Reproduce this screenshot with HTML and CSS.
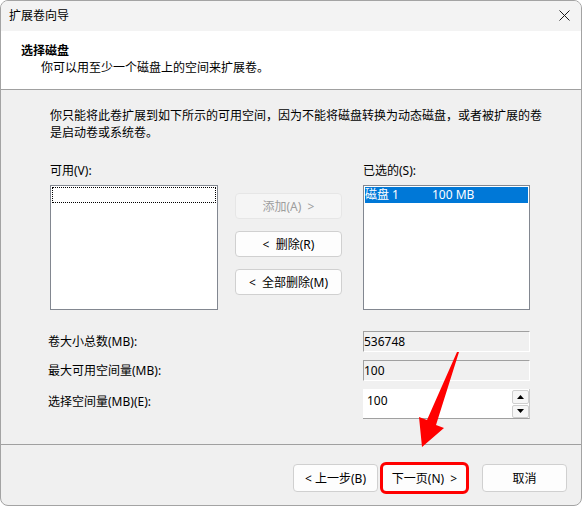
FILE: index.html
```html
<!DOCTYPE html>
<html lang="zh-CN">
<head>
  <meta charset="UTF-8">
  <title>扩展卷向导</title>
  <link rel="stylesheet" href="styles.css">
</head>
<body>
  <div class="window">
    <div class="titlebar">
      <span class="title">扩展卷向导</span>
      <svg class="close" width="11" height="11" viewBox="0 0 11 11">
        <path d="M0.5 0.5L10.5 10.5M10.5 0.5L0.5 10.5" stroke="#1a1a1a" stroke-width="1" fill="none"/>
      </svg>
    </div>

    <div class="header">
      <div class="header-title">选择磁盘</div>
      <div class="header-sub">你可以用至少一个磁盘上的空间来扩展卷。</div>
    </div>

    <div class="content">
      <p class="intro">你只能将此卷扩展到如下所示的可用空间，因为不能将磁盘转换为动态磁盘，或者被扩展的卷<br>是启动卷或系统卷。</p>

      <div class="picker">
        <div class="label">可用(V):</div>
        <div></div>
        <div class="label">已选的(S):</div>

        <div class="listbox listbox-left">
          <div class="item focus"></div>
        </div>
        <div class="actions">
          <button class="btn" disabled>添加(A)  &gt;</button>
          <button class="btn">&lt;  删除(R)</button>
          <button class="btn">&lt;  全部删除(M)</button>
        </div>
        <div class="listbox">
          <div class="item selected"><span class="col-name">磁盘 1</span><span>100 MB</span></div>
        </div>
      </div>

      <div class="fields">
        <div class="field-label">卷大小总数(MB):</div>
        <div class="readonly">536748</div>
        <div class="field-label">最大可用空间量(MB):</div>
        <div class="readonly">100</div>
        <div class="field-label field-label-spin">选择空间量(MB)(E):</div>
        <div class="spin">
          <span class="spin-value">100</span>
          <div class="spin-buttons">
            <span class="spin-btn">
              <svg width="7" height="4" viewBox="0 0 7 4"><polygon points="3.5,0 7,4 0,4" fill="#000"/></svg>
            </span>
            <span class="spin-btn">
              <svg width="7" height="4" viewBox="0 0 7 4"><polygon points="0,0 7,0 3.5,4" fill="#000"/></svg>
            </span>
          </div>
        </div>
      </div>
    </div>

    <div class="footer">
      <button class="btn btn-footer">&lt; 上一步(B)</button>
      <button class="btn btn-footer btn-next">下一页(N)  &gt;</button>
      <button class="btn btn-footer btn-cancel">取消</button>
    </div>

    <!-- annotation arrow pointing at the next button -->
    <svg class="arrow" width="50" height="102" viewBox="0 0 50 102">
      <polygon points="44,4 21,77 29,80 7,99 4,69 12,72 42,4" fill="#ff0000"/>
    </svg>
  </div>
</body>
</html>
```

FILE: styles.css
```css
* {
  box-sizing: border-box;
}

body {
  margin: 0;
  font-family: "Noto Sans", "Noto Sans CJK SC", sans-serif;
  font-size: 12px;
  color: #000;
  background: #fff;
}

.window {
  position: relative;
  width: 582px;
  height: 506px;
  border: 1px solid #a3a3a3;
  border-radius: 8px;
  background: #f0f0f0;
  overflow: hidden;
  display: flex;
  flex-direction: column;
}

.titlebar {
  flex: none;
  height: 30px;
  background: #f3f3f3;
  display: flex;
  align-items: center;
  justify-content: space-between;
  padding: 0 11px 2px 8px;
  line-height: 17px;
}

.header {
  flex: none;
  height: 59px;
  background: #fff;
  border-bottom: 1px solid #a0a0a0;
  padding: 11px 0 0 20px;
  line-height: 17px;
}

.header-title {
  font-weight: bold;
}

.header-sub {
  padding-left: 20px;
}

.content {
  flex: 1;
  padding: 17px 0 0 49px;
}

.intro {
  margin: 0;
  line-height: 17px;
}

.picker {
  display: grid;
  grid-template-columns: 185px 128px 167px;
  row-gap: 6px;
  margin-top: 21px;
}

.label {
  line-height: 17px;
}

.listbox {
  height: 125px;
  width: 167px;
  background: #fff;
  border: 1px solid #828790;
  padding: 1px;
}

.listbox-left {
  width: 168px;
}

.item {
  height: 16px;
  line-height: 16px;
  white-space: nowrap;
}

.focus {
  border: 1px dotted #000;
}

.selected {
  background: #0078d7;
  color: #fff;
}

.col-name {
  display: inline-block;
  width: 67px;
}

.actions {
  display: flex;
  flex-direction: column;
  gap: 12px;
  padding-top: 8px;
}

.btn {
  font: inherit;
  color: #000;
  height: 26px;
  width: 107px;
  padding: 0;
  background: #fdfdfd;
  border: 1px solid #d0d0d0;
  border-radius: 4px;
  white-space: pre;
}

.btn:disabled {
  background: #f5f5f5;
  border-color: #e6e6e6;
  color: #9d9d9d;
}

.fields {
  display: grid;
  grid-template-columns: 315px 167px;
  grid-template-rows: 21px 21px 30px;
  row-gap: 8px;
  margin: 21px 0 0 -2px;
}

.field-label {
  line-height: 21px;
}

.field-label-spin {
  padding-top: 2px;
}

.readonly {
  background: #f0f0f0;
  border: 1px solid;
  border-color: #a0a0a0 #fff #fff #a0a0a0;
  line-height: 19px;
}

.spin {
  display: flex;
  justify-content: space-between;
  background: #fff;
  border-bottom: 1px solid #a0a0a0;
  border-right: 1px solid #c8c8c8;
}

.spin-value {
  padding: 2px 0 0 4px;
  line-height: 19px;
}

.spin-buttons {
  display: flex;
  flex-direction: column;
  gap: 1px;
  padding-top: 1px;
  width: 17px;
}

.spin-btn {
  height: 14px;
  display: flex;
  align-items: center;
  justify-content: center;
  background: #f6f6f6;
  border: 1px solid #cfcfcf;
  border-radius: 2px;
}

.footer {
  flex: none;
  height: 61px;
  border-top: 1px solid #a0a0a0;
  display: flex;
  justify-content: flex-end;
  align-items: flex-start;
  gap: 4px;
  padding: 19px 14px 0 0;
}

.btn-footer {
  width: 85px;
  height: 28px;
}

.btn-next {
  outline: 3px solid #ff0000;
  outline-offset: -1px;
  margin-right: 11px;
}

.arrow {
  position: absolute;
  left: 414px;
  top: 347px;
}
```
